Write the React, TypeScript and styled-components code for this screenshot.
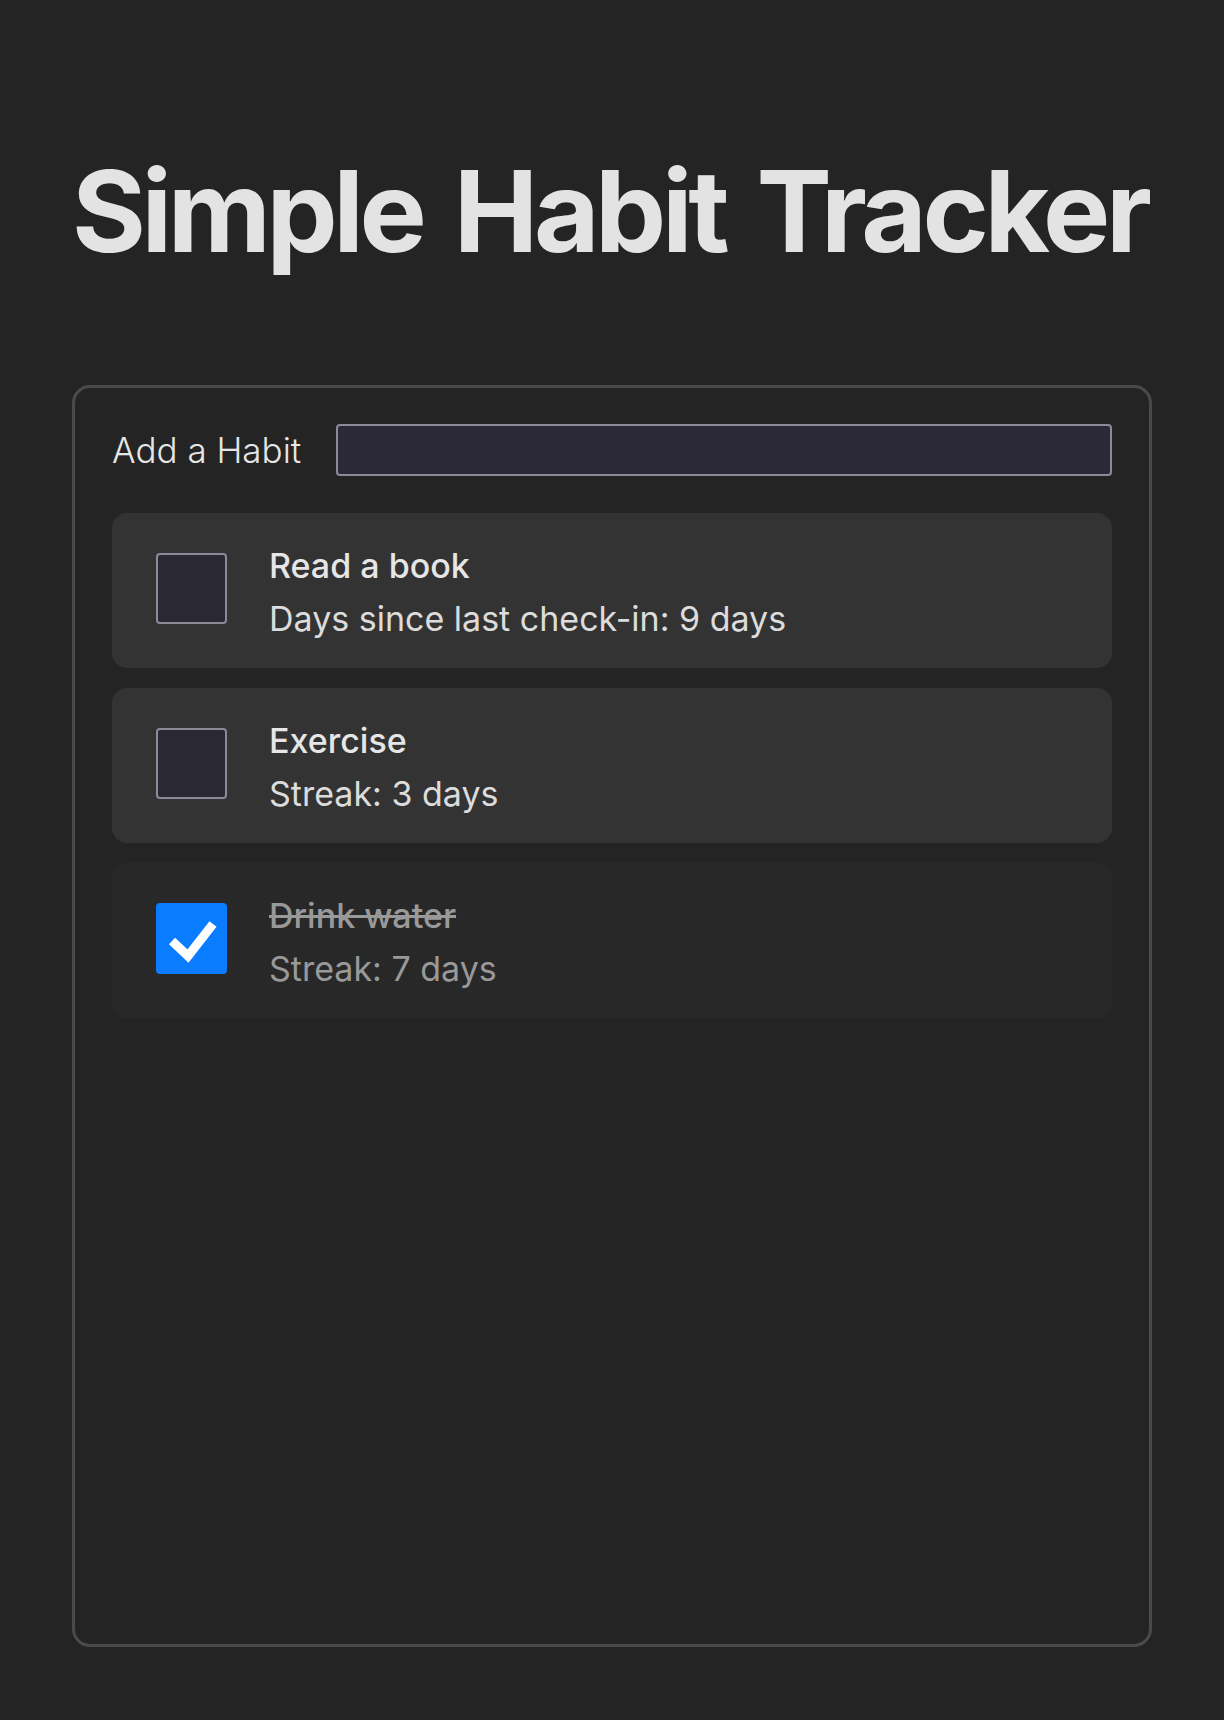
import styled, { createGlobalStyle } from "styled-components";

const GlobalStyle = createGlobalStyle`
  html, body {
    margin: 0;
    padding: 0;
    background: #242424;
  }
  body {
    font-family: Inter, "Noto Sans", sans-serif;
    color: #e6e6e6;
  }
`;

type Habit = {
  name: string;
  detail: string;
  done: boolean;
};

const habits: Habit[] = [
  { name: "Read a book", detail: "Days since last check-in: 9 days", done: false },
  { name: "Exercise", detail: "Streak: 3 days", done: false },
  { name: "Drink water", detail: "Streak: 7 days", done: true },
];

export default function App() {
  return (
    <Page>
      <GlobalStyle />
      <Title>Simple Habit Tracker</Title>
      <Panel>
        <AddRow>
          <AddLabel htmlFor="habit-input">Add a Habit</AddLabel>
          <AddInput id="habit-input" type="text" />
        </AddRow>
        <List>
          {habits.map((h) => (
            <HabitRow key={h.name} $done={h.done}>
              <Check $checked={h.done}>
                {h.done && (
                  <svg width="71" height="70" viewBox="0 0 71 70">
                    <polyline
                      points="16,37 32,52 57,20"
                      fill="none"
                      stroke="#fff"
                      strokeWidth="9"
                      strokeLinejoin="miter"
                      strokeLinecap="butt"
                    />
                  </svg>
                )}
              </Check>
              <HabitText>
                <HabitName $done={h.done}>{h.name}</HabitName>
                <HabitDetail $done={h.done}>{h.detail}</HabitDetail>
              </HabitText>
            </HabitRow>
          ))}
        </List>
      </Panel>
    </Page>
  );
}

const Page = styled.div`
  padding: 0 72px 73px;
`;

const Title = styled.h1`
  margin: 142px 0 105px;
  font-family: Inter, sans-serif;
  font-weight: 700;
  font-size: 113px;
  line-height: 138px;
  letter-spacing: -4.4px;
  word-spacing: 9px;
  color: #e3e3e3;
  white-space: nowrap;
`;

const Panel = styled.div`
  box-sizing: border-box;
  height: 1262px;
  border: 3px solid #4a4a4a;
  border-radius: 18px;
  padding: 36px 37px;
  display: flex;
  flex-direction: column;
  gap: 37px;
`;

const AddRow = styled.div`
  display: flex;
  align-items: center;
  gap: 35px;
`;

const AddLabel = styled.label`
  font-size: 35px;
  font-weight: 300;
  color: #e6e6e6;
  white-space: nowrap;
`;

const AddInput = styled.input`
  flex: 1;
  box-sizing: border-box;
  height: 52px;
  background: #2a2935;
  border: 2px solid #8e8b99;
  border-radius: 4px;
  outline: none;
  color: #e6e6e6;
  font-family: Inter, sans-serif;
  font-size: 28px;
  padding: 0 12px;
`;

const List = styled.div`
  display: flex;
  flex-direction: column;
  gap: 20px;
`;

const HabitRow = styled.div<{ $done: boolean }>`
  display: flex;
  align-items: flex-start;
  gap: 42px;
  padding: 26px 44px 23px;
  border-radius: 15px;
  background: ${(p) => (p.$done ? "#282828" : "#333333")};
`;

const Check = styled.div<{ $checked: boolean }>`
  box-sizing: border-box;
  width: 71px;
  height: 71px;
  margin-top: 14px;
  flex-shrink: 0;
  border-radius: 4px;
  background: ${(p) => (p.$checked ? "#0a7cff" : "#2a2833")};
  border: ${(p) => (p.$checked ? "none" : "2px solid #8d8a98")};
  display: flex;
  align-items: center;
  justify-content: center;

  svg {
    display: block;
  }
`;

const HabitText = styled.div`
  display: flex;
  flex-direction: column;
`;

const HabitName = styled.div<{ $done: boolean }>`
  font-size: 34px;
  font-weight: 500;
  line-height: 53px;
  color: ${(p) => (p.$done ? "#999999" : "#e6e6e6")};
  text-decoration: ${(p) => (p.$done ? "line-through" : "none")};
`;

const HabitDetail = styled.div<{ $done: boolean }>`
  font-size: 34px;
  font-weight: 400;
  line-height: 53px;
  color: ${(p) => (p.$done ? "#999999" : "#dcdcdc")};
`;
